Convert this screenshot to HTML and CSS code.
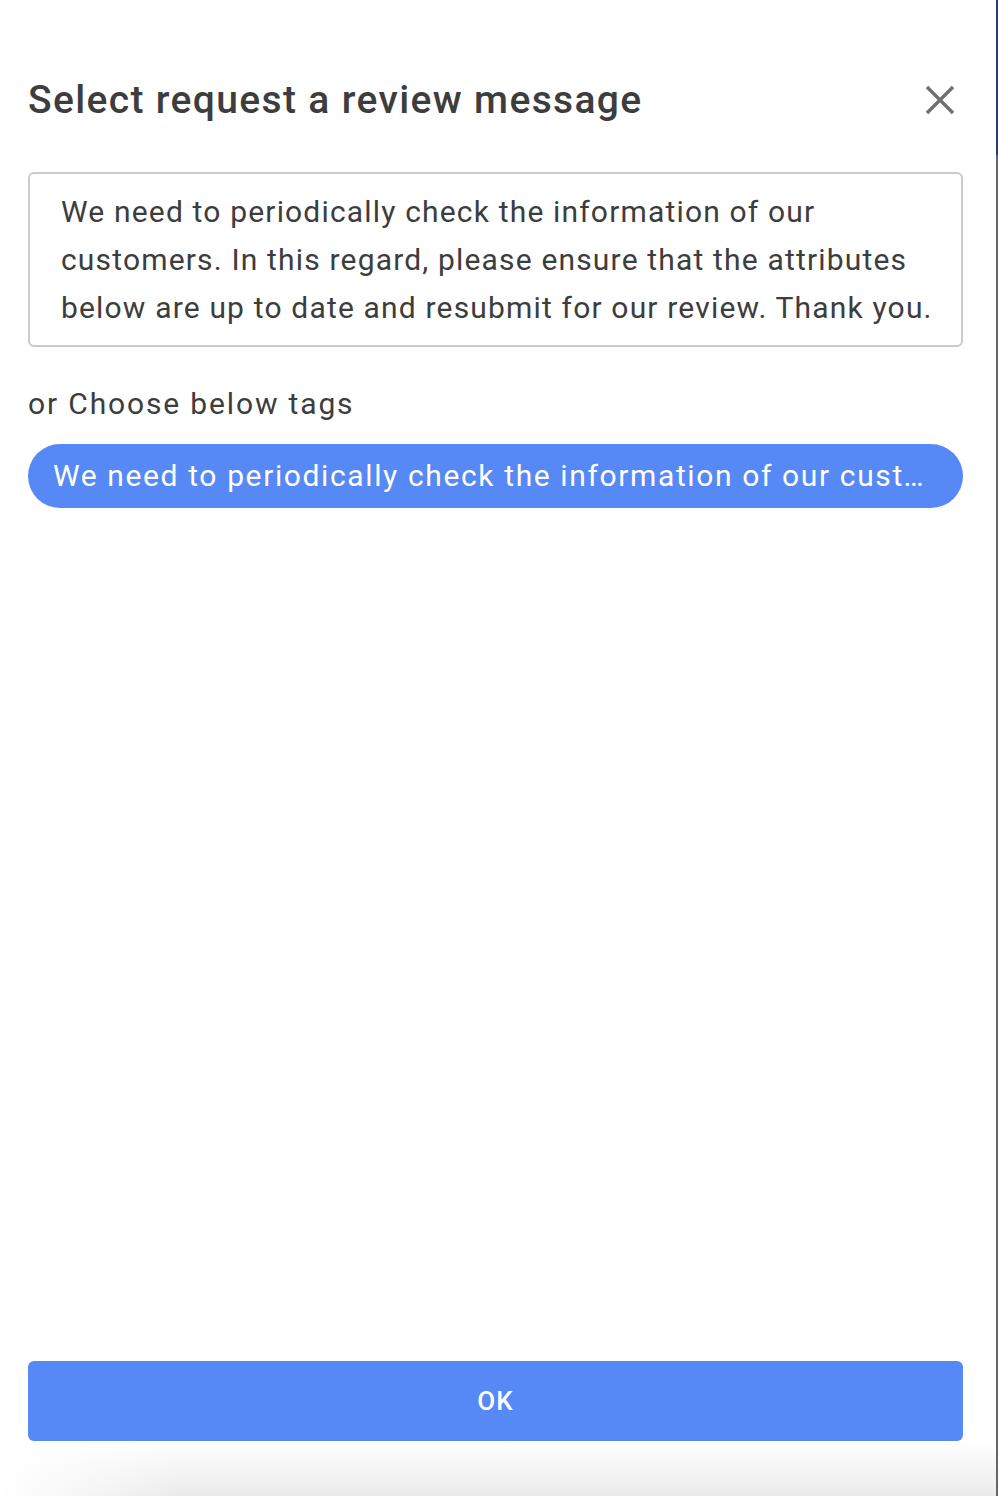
FILE: index.html
```html
<!DOCTYPE html>
<html lang="en">
<head>
  <meta charset="UTF-8">
  <title>Select request a review message</title>
  <link rel="stylesheet" href="styles.css">
</head>
<body>

  <!-- review message dialog -->
  <div class="dialog">
    <div class="dialog-head">
      <h1 class="dialog-title">Select request a review message</h1>
      <button class="close-btn" aria-label="Close">
        <svg width="30" height="30" viewBox="0 0 30 30">
          <path d="M2 2 L28 28 M28 2 L2 28" stroke="#6e6e6e" stroke-width="3.4" fill="none"/>
        </svg>
      </button>
    </div>

    <div class="message-box">We need to periodically check the information of our customers. In this regard, please ensure that the attributes below are up to date and resubmit for our review. Thank you.</div>

    <div class="tags-label">or Choose below tags</div>
    <div class="tag-list">
      <div class="tag">We need to periodically check the information of our customers. In this regard, please ensure that the attributes below are up to date and resubmit for our review. Thank you.</div>
    </div>

    <div class="spacer"></div>

    <button class="ok-btn">OK</button>
    <div class="dialog-fade"></div>
  </div>

  <!-- page behind the dialog -->
  <div class="page-edge">
    <div class="page-edge-top"></div>
  </div>

</body>
</html>
```

FILE: styles.css
```css
    body {
      margin: 0;
      font-family: Roboto, 'Noto Sans', sans-serif;
      background: #fff;
      display: flex;
      height: 1496px;
      overflow: hidden;
    }

    .dialog {
      width: 996px;
      box-sizing: border-box;
      padding: 0 33px 0 28px;
      display: flex;
      flex-direction: column;
      background: #fff;
      color: #3d3d3d;
    }

    .dialog-head {
      margin-top: 76px;
      height: 48px;
      display: flex;
      align-items: center;
      justify-content: space-between;
    }

    .dialog-title {
      margin: 0;
      font-size: 39px;
      font-weight: 500;
      line-height: 48px;
      letter-spacing: 1.35px;
      color: #3d3d3d;
    }

    .close-btn {
      width: 46px;
      height: 46px;
      padding: 0;
      border: none;
      background: none;
      display: flex;
      align-items: center;
      justify-content: center;
      cursor: pointer;
    }

    .message-box {
      margin-top: 48px;
      border: 2px solid #cbcbcb;
      border-radius: 6px;
      padding: 14px 16px 13px 31px;
      font-size: 30px;
      line-height: 48px;
      letter-spacing: 1.17px;
      color: #3d3d3d;
    }

    .tags-label {
      margin-top: 37px;
      font-size: 30px;
      line-height: 40px;
      letter-spacing: 1.85px;
    }

    .tag-list {
      margin-top: 20px;
      display: flex;
    }

    .tag {
      width: 100%;
      box-sizing: border-box;
      height: 64px;
      line-height: 64px;
      padding: 0 30px 0 25px;
      border-radius: 32px;
      background: #5689f6;
      color: #fff;
      font-size: 30px;
      letter-spacing: 1.62px;
      white-space: nowrap;
      overflow: hidden;
      text-overflow: ellipsis;
    }

    .spacer {
      flex: 1;
    }

    .ok-btn {
      height: 80px;
      border: none;
      border-radius: 6px;
      background: #5689f6;
      color: #fff;
      font-family: Roboto, sans-serif;
      font-size: 26px;
      font-weight: 500;
      letter-spacing: 1.2px;
      cursor: pointer;
    }

    .dialog-fade {
      height: 55px;
      margin: 0 -33px 0 -28px;
      background:
        linear-gradient(to right, #fff, rgba(255, 255, 255, 0) 180px),
        linear-gradient(#fff, #ebebeb);
    }

    .page-edge {
      width: 2px;
      background: #666;
    }

    .page-edge-top {
      height: 155px;
      background: #263b78;
    }
```
